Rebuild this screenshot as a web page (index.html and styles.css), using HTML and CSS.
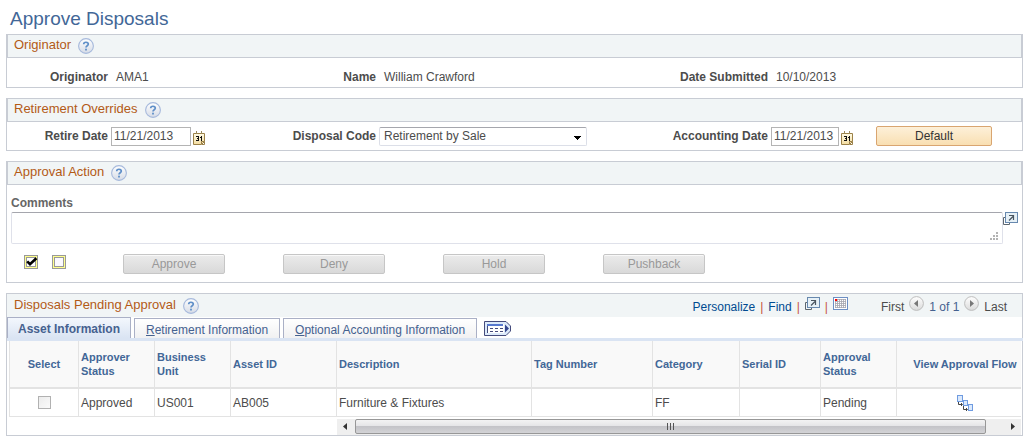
FILE: index.html
```
<!DOCTYPE html>
<html lang="en">
  <head>
    <meta charset="UTF-8" />
    <meta name="viewport" content="width=device-width, initial-scale=1.0" />
    <title>Approve Disposals</title>
    <link rel="stylesheet" href="styles.css">
  </head>

  <body>
    <!-- Icons used more than once -->
    <svg class="sprite" aria-hidden="true">
      <defs>
        <linearGradient id="helpFill" x1="0" y1="0" x2="0" y2="1">
          <stop offset="0" stop-color="#ffffff" />
          <stop offset="1" stop-color="#d5dbe6" />
        </linearGradient>
        <linearGradient id="arrowFill" x1="0" y1="0" x2="0" y2="1">
          <stop offset="0" stop-color="#ffffff" />
          <stop offset="1" stop-color="#dadada" />
        </linearGradient>
        <linearGradient id="noteFill" x1="0" y1="0" x2="0" y2="1">
          <stop offset="0" stop-color="#fffbe6" />
          <stop offset="1" stop-color="#f3dca0" />
        </linearGradient>
      </defs>
      <symbol id="help" viewBox="0 0 16 16">
        <circle cx="8" cy="8" r="7.4" fill="url(#helpFill)" stroke="#a6b9dc" stroke-width="1.1" />
        <path d="M5.7 6.2C5.7 3.6 10.3 3.6 10.3 6.1C10.3 7.8 8 7.6 8 9.6" fill="none" stroke="#5f8fc8" stroke-width="1.7" />
        <rect x="7.1" y="10.7" width="1.8" height="1.8" fill="#5f8fc8" />
      </symbol>
      <symbol id="calendar" viewBox="0 0 12 14">
        <path d="M.5 2.5H11.5V10.5L8.5 13.5H.5Z" fill="url(#noteFill)" stroke="#9b8148" />
        <path d="M8.5 13V10.5H11.5M11.5 11V13.5H9" fill="none" stroke="#9b8148" />
        <path d="M3.5 0V3M8.5 0V3" stroke="#9b8a5c" />
        <path d="M3 5H6V10H3V9H5V8H4V7H5V6H3ZM8 5H9V10H8V7H7V6H8Z" fill="#111" />
      </symbol>
      <symbol id="popup" viewBox="0 0 15 13">
        <path d="M2 5.5H.5V12.5H6.5V11" fill="none" stroke="#5d666f" />
        <rect x="2.5" y=".5" width="12" height="10" fill="#e6f0f6" stroke="#6788ae" />
        <path d="M6 8.5L10 4.5M6 3.5H10.5V8" fill="none" stroke="#4a5560" stroke-width="1.2" />
      </symbol>
    </svg>

    <h1>Approve Disposals</h1>

    <section class="panel">
      <header class="panel-head">
        <h2>Originator</h2>
        <button class="icon-btn" aria-label="Help"><svg width="16" height="16"><use href="#help" /></svg></button>
      </header>
      <div class="fields static">
        <b>Originator</b>
        <span>AMA1</span>
        <b>Name</b>
        <span>William Crawford</span>
        <b>Date Submitted</b>
        <span>10/10/2013</span>
      </div>
    </section>

    <section class="panel">
      <header class="panel-head">
        <h2>Retirement Overrides</h2>
        <button class="icon-btn" aria-label="Help"><svg width="16" height="16"><use href="#help" /></svg></button>
      </header>
      <div class="fields">
        <label for="retireDate">Retire Date</label>
        <div class="control">
          <input type="text" class="date wide" id="retireDate" value="11/21/2013" />
          <button class="icon-btn pick" aria-label="Choose date"><svg width="12" height="14"><use href="#calendar" /></svg></button>
        </div>
        <label for="disposalCode">Disposal Code</label>
        <div class="control">
          <select id="disposalCode">
            <option>Retirement by Sale</option>
          </select>
        </div>
        <label for="accountingDate">Accounting Date</label>
        <div class="control">
          <input type="text" class="date" id="accountingDate" value="11/21/2013" />
          <button class="icon-btn pick" aria-label="Choose date"><svg width="12" height="14"><use href="#calendar" /></svg></button>
          <button class="btn default">Default</button>
        </div>
      </div>
    </section>

    <section class="panel">
      <header class="panel-head">
        <h2>Approval Action</h2>
        <button class="icon-btn" aria-label="Help"><svg width="16" height="16"><use href="#help" /></svg></button>
      </header>
      <div class="comments">
        <label for="comments">Comments</label>
        <div class="comment-row">
          <div class="comment-box">
            <textarea id="comments"></textarea>
            <svg class="grip" width="8" height="8" fill="#b3b3b3"><path d="M6 0h2v2H6zM3 3h2v2H3zM6 3h2v2H6zM0 6h2v2H0zM3 6h2v2H3zM6 6h2v2H6z" /></svg>
          </div>
          <button class="icon-btn" aria-label="Open comments in a window"><svg width="15" height="13"><use href="#popup" /></svg></button>
        </div>
      </div>
      <div class="actions">
        <div class="select-icons">
          <button class="icon-btn" aria-label="Select all">
            <svg width="14" height="14">
              <rect x=".5" y=".5" width="13" height="13" fill="#ffff8c" stroke="#999" />
              <rect x="2.5" y="2.5" width="9" height="9" fill="#fff" stroke="#999" />
              <path d="M3.2 6.3L6 9.2L12.4 3.2" fill="none" stroke="#000" stroke-width="2.6" />
            </svg>
          </button>
          <button class="icon-btn" aria-label="Clear all">
            <svg width="14" height="14">
              <rect x=".5" y=".5" width="13" height="13" fill="#ffff8c" stroke="#999" />
              <rect x="2.5" y="2.5" width="9" height="9" fill="#fbf9ff" stroke="#999" />
            </svg>
          </button>
        </div>
        <button class="btn" disabled>Approve</button>
        <button class="btn" disabled>Deny</button>
        <button class="btn" disabled>Hold</button>
        <button class="btn" disabled>Pushback</button>
      </div>
    </section>

    <section class="panel grid-panel">
      <header class="panel-head">
        <h2>Disposals Pending Approval</h2>
        <button class="icon-btn" aria-label="Help"><svg width="16" height="16"><use href="#help" /></svg></button>
        <div class="tools">
          <a href="#">Personalize</a><i>|</i>
          <a href="#">Find</a><i>|</i>
          <button class="icon-btn" aria-label="View all"><svg width="15" height="13"><use href="#popup" /></svg></button><i>|</i>
          <button class="icon-btn" aria-label="Download">
            <svg width="15" height="13">
              <rect x=".5" y=".5" width="14" height="12" fill="#fff" stroke="#6d8fc4" />
              <path d="M2 2.5H13M2 4.5H13M2 6.5H13M2 8.5H13M2 10.5H13M2.5 2V11M4.5 2V11M6.5 2V11M8.5 2V11M10.5 2V11M12.5 2V11" stroke="#a5a5ad" stroke-width=".8" />
              <rect x="2" y="2" width="2" height="2" fill="#f00" />
            </svg>
          </button>
        </div>
        <div class="pager">
          <span>First</span>
          <button class="icon-btn" aria-label="Previous">
            <svg width="15" height="15"><circle cx="7.5" cy="7.5" r="6.9" fill="url(#arrowFill)" stroke="#bdbdbd" /><path d="M9 4V11L5 7.5Z" fill="#777" /></svg>
          </button>
          <span class="count">1 of 1</span>
          <button class="icon-btn" aria-label="Next">
            <svg width="15" height="15"><circle cx="7.5" cy="7.5" r="6.9" fill="url(#arrowFill)" stroke="#bdbdbd" /><path d="M6 4V11L10 7.5Z" fill="#777" /></svg>
          </button>
          <span>Last</span>
        </div>
      </header>

      <nav class="tabs">
        <a class="tab active" href="#">Asset Information</a>
        <a class="tab" href="#"><u>R</u>etirement Information</a>
        <a class="tab" href="#"><u>O</u>ptional Accounting Information</a>
        <button class="icon-btn show-all" aria-label="Show all columns">
          <svg width="27" height="15">
            <path d="M.5 .5H22L26.5 5V10L22 14.5H.5Z" fill="#dceafa" stroke="#454b7c" />
            <rect x="3" y="3" width="17" height="9" fill="#fff" />
            <path d="M3.5 12V3.5" stroke="#454b7c" />
            <path d="M3 4H19" stroke="#5779cf" stroke-width="2" />
            <path d="M6 7.5H19M6 10.5H19" stroke="#454b7c" stroke-dasharray="3 2" />
            <path d="M21 3.5V11.5L25 7.5Z" fill="#34458e" />
          </svg>
        </button>
      </nav>

      <div class="grid-body">
        <table>
          <colgroup>
            <col class="c-select" />
            <col class="c-status" />
            <col class="c-status" />
            <col class="c-asset" />
            <col class="c-desc" />
            <col class="c-tag" />
            <col class="c-cat" />
            <col class="c-serial" />
            <col class="c-status" />
            <col class="c-flow" />
          </colgroup>
          <thead>
            <tr>
              <th class="center">Select</th>
              <th>Approver Status</th>
              <th>Business Unit</th>
              <th>Asset ID</th>
              <th>Description</th>
              <th>Tag Number</th>
              <th>Category</th>
              <th>Serial ID</th>
              <th>Approval Status</th>
              <th class="flow">View Approval Flow</th>
            </tr>
          </thead>
          <tbody>
            <tr>
              <td class="center"><input type="checkbox" aria-label="Select row" disabled /></td>
              <td>Approved</td>
              <td>US001</td>
              <td>AB005</td>
              <td>Furniture &amp; Fixtures</td>
              <td></td>
              <td>FF</td>
              <td></td>
              <td>Pending</td>
              <td class="flow">
                <button class="icon-btn" aria-label="View approval flow">
                  <svg width="16" height="16">
                    <g fill="#dbe9fc" stroke="#6f9be0">
                      <rect x=".5" y=".5" width="5" height="6" />
                      <rect x="6.5" y="5.5" width="4" height="5" />
                      <rect x="11.5" y="9.5" width="4" height="6" />
                    </g>
                    <path d="M1.5 7V9.5H5M4 8L5.5 9.5L4 11M6.5 11V14.5H10M9 13L10.5 14.5L9 16" fill="none" stroke="#444" />
                  </svg>
                </button>
              </td>
            </tr>
          </tbody>
        </table>
        <div class="scrollbar">
          <svg width="18" height="15"><path d="M10 4V11L6 7.5Z" fill="#333" /></svg>
          <div class="thumb"><span></span><span></span><span></span></div>
          <svg width="35" height="15"><path d="M25 4V11L29 7.5Z" fill="#333" /></svg>
        </div>
      </div>
    </section>
  </body>
</html>
```

FILE: styles.css
```
* {
  box-sizing: border-box;
}
body {
  margin: 8px 13px 12px 6px;
  background-color: #fff;
  color: #4c4c4c;
  font-family: "Liberation Sans", Arial, sans-serif;
  font-size: 12px;
  line-height: 16px;
}
.sprite {
  position: absolute;
  width: 0;
  height: 0;
}
h1 {
  margin: 0 0 4px 4px;
  color: #426797;
  font-size: 19px;
  font-weight: normal;
  line-height: 22px;
}
a {
  color: #004b91;
  text-decoration: none;
}
input,
select,
textarea,
button {
  font-family: inherit;
  font-size: 12px;
  color: inherit;
}
.icon-btn {
  display: flex;
  padding: 0;
  border: none;
  background: none;
}

/* Panels */
.panel {
  margin-bottom: 10px;
  border: 1px solid #c8ccd4;
}
.panel-head {
  display: flex;
  align-items: center;
  gap: 7px;
  height: 23px;
  padding-left: 6px;
  border: 1px solid #c8ccd4;
  border-width: 0 1px 1px;
  background-color: #f1f5f6;
}
h2 {
  margin: 0 0 2px;
  color: #b35a16;
  font-size: 13px;
  font-weight: normal;
  line-height: 16px;
}

/* Label and value pairs */
.fields {
  display: grid;
  grid-template-columns: 101px 165fr 97px 276fr 110px 251fr;
  column-gap: 3px;
  align-items: center;
  min-height: 28px;
}
.fields label,
.fields b {
  font-weight: bold;
  text-align: right;
  white-space: nowrap;
}
.fields.static {
  min-height: 29px;
  padding-top: 8px;
}
.fields.static span {
  padding-left: 5px;
}
.control {
  display: flex;
  align-items: center;
}
.date {
  width: 68px;
  height: 19px;
  padding: 0 2px;
  border: 1px solid #b4b4b4;
}
.date.wide {
  width: 80px;
}
.pick {
  margin: 3px 0 0 2px;
}
select {
  width: 208px;
  height: 19px;
  padding: 0 4px;
  border: 1px solid #dcdfe8;
  border-top-color: #a5a6ad;
  border-radius: 2px;
  appearance: none;
  background: linear-gradient(#000, #000) no-repeat right 5px top 8px / 7px 1px,
    linear-gradient(#000, #000) no-repeat right 6px top 9px / 5px 1px,
    linear-gradient(#000, #000) no-repeat right 7px top 10px / 3px 1px,
    linear-gradient(#000, #000) no-repeat right 8px top 11px / 1px 1px,
    #fff;
}
.btn {
  width: 102px;
  height: 20px;
  padding: 0;
  border: 1px solid #c6c6c6;
  border-radius: 2px;
  background: linear-gradient(#ebebeb, #d9d9d9);
  box-shadow: inset 0 1px #f8f8f8;
}
.btn:disabled {
  color: #999;
}
.btn.default {
  width: 116px;
  margin-left: 23px;
  border-color: #d9a570;
  background: linear-gradient(#fdf0d9, #f9dfb2);
  box-shadow: none;
  color: #333;
}

/* Approval action */
.comments {
  padding: 10px 4px 0;
}
.comments label {
  display: block;
  margin-bottom: 1px;
  color: #666;
  font-weight: bold;
}
.comment-row {
  display: flex;
  align-items: flex-start;
}
.comment-box {
  flex: 1;
  position: relative;
  display: flex;
}
textarea {
  width: 100%;
  height: 32px;
  border: 1px solid #dfe1ea;
  border-top-color: #a5a6ad;
  border-radius: 2px;
  resize: none;
}
.grip {
  position: absolute;
  right: 5px;
  bottom: 4px;
}
.actions {
  display: flex;
  gap: 58px;
  padding: 10px 17px 8px;
}
.select-icons {
  display: flex;
  align-items: flex-start;
  gap: 14px;
  width: 41px;
  padding-top: 1px;
}

/* Disposals grid */
.grid-panel {
  margin-bottom: 0;
}
.grid-panel .panel-head {
  padding-left: 7px;
  border: none;
}
.tools,
.pager {
  display: flex;
  align-items: center;
  gap: 5px;
  padding-top: 2px;
}
.tools {
  margin-left: auto;
}
.tools i {
  color: #c6523c;
  font-style: normal;
}
.tools .icon-btn,
.pager .icon-btn {
  margin-bottom: 6px;
}
.pager {
  margin: 0 15px 0 26px;
}
.count {
  color: #45618f;
}
.tabs {
  display: flex;
  align-items: flex-end;
  gap: 3px;
  height: 24px;
  margin-right: -4px;
  border-bottom: 3px solid #dae4f3;
}
.tab {
  height: 20px;
  padding: 0 11px;
  border: 1px solid #aab0c6;
  border-width: 1px 1px 0;
  background: linear-gradient(#fff, #f1f1f2);
  color: #45618f;
  line-height: 22px;
}
.tab.active {
  height: 21px;
  padding: 0 10px;
  background: linear-gradient(#f3f7fd, #dae4f3);
  font-weight: bold;
}
.show-all {
  margin: 0 0 2px 4px;
}
.grid-body {
  padding: 0 1px 0 2px;
}
table {
  width: 100%;
  table-layout: fixed;
  border-collapse: separate;
  border-spacing: 0;
  border-left: 1px solid #e3e3e3;
}
.c-select {
  width: 69px;
}
.c-status {
  width: 76px;
}
.c-asset {
  width: 106px;
}
.c-desc {
  width: 195px;
}
.c-tag {
  width: 121px;
}
.c-cat {
  width: 87px;
}
.c-serial {
  width: 81px;
}
th,
td {
  padding: 0 2px;
  border-right: 1px solid #e3e3e3;
  text-align: left;
}
th:last-child,
td:last-child {
  border-right: none;
}
th {
  height: 48px;
  border-bottom: 2px solid #e3e3e3;
  background-color: #f9f9f9;
  color: #426797;
  font-size: 11px;
  line-height: 14px;
}
td {
  height: 28px;
  border-bottom: 1px solid #e3e3e3;
}
.center {
  text-align: center;
}
.flow {
  padding-left: 14px;
  text-align: center;
  white-space: nowrap;
}
.flow .icon-btn {
  margin: 0 auto;
}
td input[type="checkbox"] {
  display: block;
  width: 13px;
  height: 13px;
  margin: 0 auto;
  border: 1px solid #b1b1b1;
  appearance: none;
  background: linear-gradient(135deg, #ececec, #fafafa);
}
.scrollbar {
  display: flex;
  height: 16px;
  margin: 2px 0 0 328px;
  background-color: #efefef;
}
.thumb {
  flex: 1;
  display: flex;
  align-items: center;
  justify-content: center;
  gap: 1px;
  height: 15px;
  border: 1px solid #979797;
  border-radius: 2px;
  background: linear-gradient(#f3f3f3, #e4e4e6 50%, #c4c4c8 50%, #d3d3d6);
}
.thumb span {
  width: 2px;
  height: 7px;
  border-left: 1px solid #555;
}
```
